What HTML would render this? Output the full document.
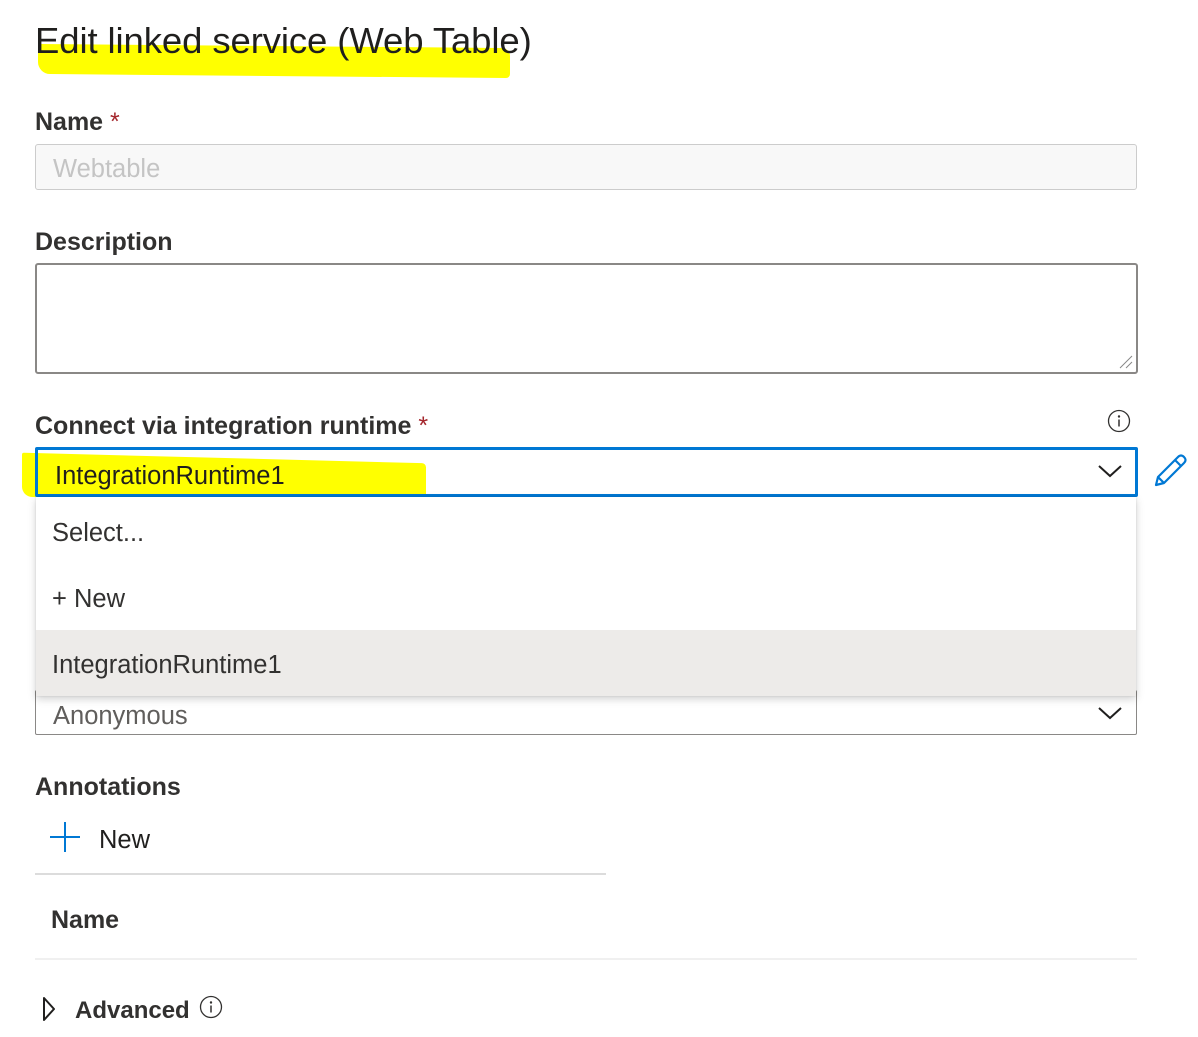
<!DOCTYPE html>
<html><head><meta charset="utf-8"><style>
body{margin:0;width:1198px;height:1037px;background:#fff;font-family:"Segoe UI","Liberation Sans",sans-serif;color:#323130;position:relative;overflow:hidden}
.a{position:absolute;white-space:nowrap}
.lbl{font-size:25px;line-height:30px;font-weight:600;color:#323130}
.t{font-size:25.5px;line-height:30px}
.star{color:#a4262c;font-weight:400}
.hl{position:absolute;background:#ffff00}
</style></head><body>
<div class="hl" style="left:38px;top:46px;width:472px;height:30px;border-radius:2px 8px 4px 12px;transform:skewY(0.5deg)"></div>
<div class="hl" style="left:22px;top:458px;width:404px;height:44px;border-radius:2px 4px 10px 10px;transform:skewY(1.5deg)"></div>
<div class="a" style="left:35px;top:19px;font-size:36.5px;line-height:44px;color:#201f1e;letter-spacing:-0.1px">Edit linked service (Web Table)</div>

<div class="a lbl" style="left:35px;top:107px">Name <span class="star">*</span></div>
<div class="a" style="left:35px;top:144px;width:1100px;height:44px;background:#f8f8f8;border:1px solid #ccc;border-radius:3px"></div>
<div class="a t" style="left:53px;top:154px;color:#c4c4c4">Webtable</div>

<div class="a lbl" style="left:35px;top:227px">Description</div>
<div class="a" style="left:35px;top:263px;width:1099px;height:107px;border:2px solid #8a8886;border-radius:3px"></div>
<svg class="a" style="left:1118px;top:354px" width="16" height="16"><path d="M2 14L14 2M8 14L14 8" stroke="#888" stroke-width="1"/></svg>

<div class="a lbl" style="left:35px;top:411px">Connect via integration runtime <span class="star">*</span></div>
<svg class="a" style="left:1107px;top:409px" width="24" height="24"><circle cx="12" cy="12" r="10.5" fill="none" stroke="#323130" stroke-width="1.3"/><circle cx="12" cy="7.5" r="1.2" fill="#323130"/><path d="M12 10.5v7" stroke="#323130" stroke-width="1.5"/></svg>
<div class="a" style="left:35px;top:447px;width:1097px;height:44px;border:3px solid #0078d4;border-radius:2px"></div>
<div class="a t" style="left:55px;top:461px;color:#201f1e">IntegrationRuntime1</div>
<svg class="a" style="left:1097px;top:463px" width="26" height="16"><path d="M2 3L13 13L24 3" fill="none" stroke="#201f1e" stroke-width="2"/></svg>
<svg class="a" style="left:1151px;top:452px" width="38" height="38"><path d="M5 33L7 25L27 5Q30 2 33 5Q36 8 33 11L13 31Z M24 8L30 14 M7 25L13 31" fill="none" stroke="#0078d4" stroke-width="2.2" stroke-linejoin="round"/></svg>

<div class="a" style="left:35px;top:690px;width:1100px;height:43px;border:1px solid #8a8886;border-radius:2px"></div>
<div class="a t" style="left:53px;top:701px;color:#605e5c">Anonymous</div>
<svg class="a" style="left:1097px;top:705px" width="26" height="16"><path d="M2 3L13 13L24 3" fill="none" stroke="#201f1e" stroke-width="2"/></svg>

<div class="a" style="left:36px;top:497px;width:1100px;height:199px;background:#fff;box-shadow:0 3px 8px rgba(0,0,0,0.18),0 0 2px rgba(0,0,0,0.12)"></div>
<div class="a t" style="left:52px;top:518px;color:#323130">Select...</div>
<div class="a t" style="left:52px;top:584px;color:#323130">+ New</div>
<div class="a" style="left:36px;top:630px;width:1100px;height:66px;background:#edebe9"></div>
<div class="a t" style="left:52px;top:650px;color:#323130">IntegrationRuntime1</div>

<div class="a lbl" style="left:35px;top:772px">Annotations</div>
<svg class="a" style="left:49px;top:821px" width="32" height="32"><path d="M16 1V31M1 16H31" stroke="#0078d4" stroke-width="2"/></svg>
<div class="a t" style="left:99px;top:825px;color:#201f1e">New</div>
<div class="a" style="left:35px;top:873px;width:571px;height:2px;background:#dcdcdc"></div>
<div class="a lbl" style="left:51px;top:905px">Name</div>
<div class="a" style="left:35px;top:958px;width:1102px;height:2px;background:#f0f0f0"></div>
<svg class="a" style="left:42px;top:996px" width="14" height="26"><path d="M2 2L12 13L2 24Z" fill="none" stroke="#201f1e" stroke-width="2" stroke-linejoin="round"/></svg>
<div class="a lbl" style="left:75px;top:996px;font-size:24px">Advanced</div>
<svg class="a" style="left:199px;top:995px" width="24" height="24"><circle cx="12" cy="12" r="10.5" fill="none" stroke="#323130" stroke-width="1.3"/><circle cx="12" cy="7.5" r="1.2" fill="#323130"/><path d="M12 10.5v7" stroke="#323130" stroke-width="1.5"/></svg>
</body></html>
